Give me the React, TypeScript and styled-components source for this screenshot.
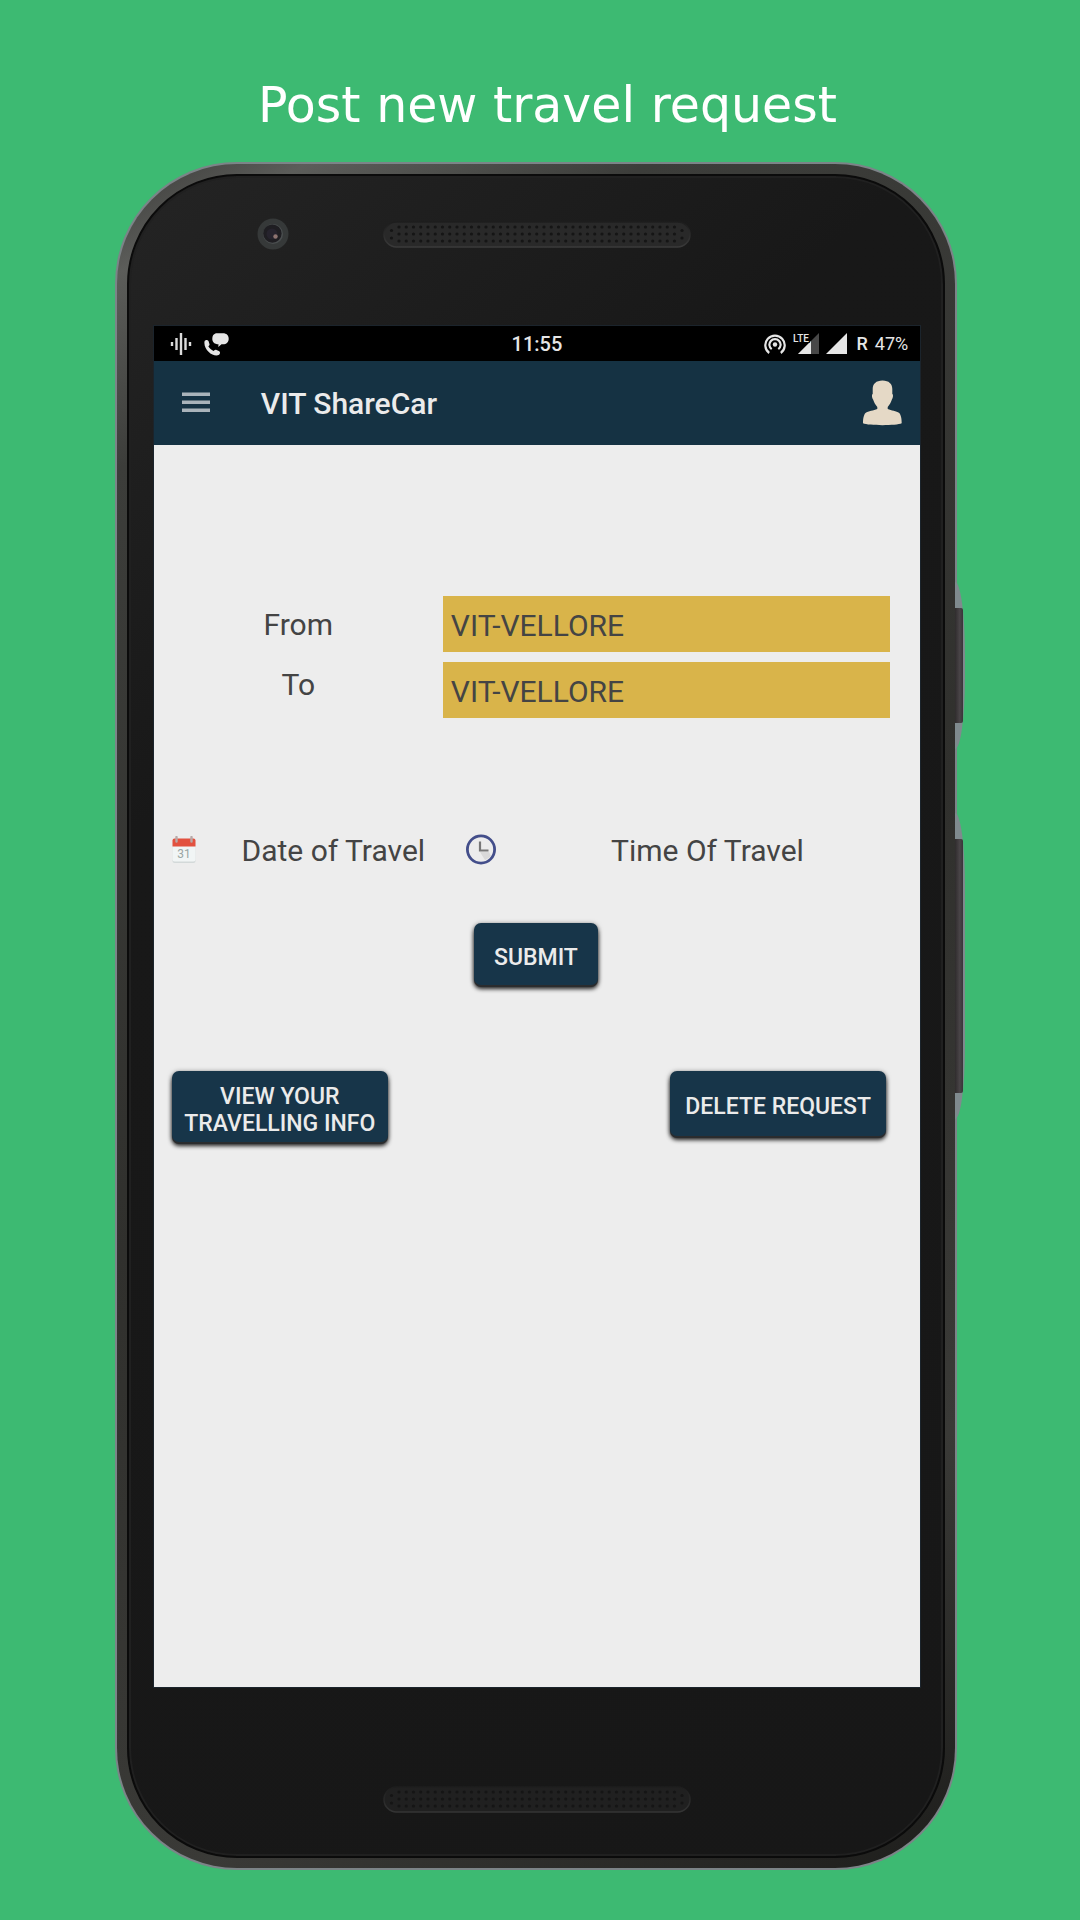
import React, { useState } from "react";
import styled, { createGlobalStyle } from "styled-components";

const GlobalStyle = createGlobalStyle`
  * { box-sizing: border-box; }
  body {
    margin: 0;
    background: #3dba72;
    font-family: Roboto, "Liberation Sans", sans-serif;
    color: #444;
  }
  button, select { font: inherit; border: 0; margin: 0; }
`;

const Page = styled.main`
  display: flex;
  flex-direction: column;
  align-items: center;
  min-height: 100vh;
  padding: 74px 0 50px;
  background: #3dba72;
`;

const Headline = styled.h1`
  margin: 0;
  padding-left: 15px;
  font-family: Verdana, "DejaVu Sans", sans-serif;
  font-size: 49px;
  line-height: 64px;
  font-weight: 400;
  color: #fff;
`;

const Phone = styled.section`
  position: relative;
  z-index: 0;
  width: 78%;
  margin: 24px 8px 0 0;
  padding: 2px;
  border-radius: 122px;
  background: #7c8488;
`;

const SideKey = styled.span<{ $top: number; $height: number }>`
  position: absolute;
  left: calc(100% - 2px);
  top: ${(p) => p.$top}px;
  width: 8px;
  height: ${(p) => p.$height}px;
  border-radius: 0 2px 2px 0;
  background: linear-gradient(90deg, #2f2c2d, #4a4548 60%, #38363a);

  &::before {
    content: "";
    position: absolute;
    z-index: -1;
    inset: -26px -2px -26px 0;
    border-radius: 0 10px 10px 0 / 0 72px 72px 0;
    background: #7f8a8e;
  }
`;

const Rim = styled.div`
  padding: 10px;
  border-radius: 120px;
  background: linear-gradient(150deg, #3a3a38 0, #5c5d5a 5%, #3c3d3a 14%, #30302d 50%, #3a3a37 80%, #1d1d1b 100%);
`;

const Face = styled.div`
  display: flex;
  flex-direction: column;
  padding: 0 23px 0 25px;
  border: 2px solid #0b0b0b;
  border-radius: 110px;
  box-shadow: inset 0 0 0 2px #202020;
  background: linear-gradient(140deg, #242424 0, #181818 28%, #171717 100%);
`;

const TopBezel = styled.div`
  display: grid;
  grid-template-columns: 1fr 308px 1fr;
  align-items: center;
  height: 150px;
  padding-bottom: 34px;
`;

const BottomBezel = styled.div`
  display: flex;
  justify-content: center;
  padding: 99px 0 43px;
`;

const CameraIcon = styled.svg`
  justify-self: center;
  margin-left: 10px;
`;

const Screen = styled.div`
  display: flex;
  flex-direction: column;
  box-shadow: 0 0 0 1px #1b242c;
  background: #ededed;
`;

const StatusBar = styled.div`
  display: grid;
  grid-template-columns: 1fr auto 1fr;
  align-items: center;
  height: 35px;
  padding: 1px 12px 0;
  background: #000;
  color: #e6e6e6;
  font-size: 18px;
  line-height: 24px;
`;

const StatusGroup = styled.div<{ $end?: boolean; $gap: number }>`
  display: flex;
  align-items: center;
  justify-content: ${(p) => (p.$end ? "flex-end" : "flex-start")};
  gap: ${(p) => p.$gap}px;
  padding-left: 4px;
`;

const Clock = styled.time`
  font-size: 20px;
  font-weight: 500;
`;

const Roaming = styled.span`
  padding-left: 2px;
  font-weight: 500;
`;

const AppBar = styled.header`
  display: flex;
  align-items: center;
  height: 84px;
  padding: 0 16px 0 24px;
  background: #153243;
`;

const IconButton = styled.button`
  display: flex;
  padding: 0;
  background: none;
  cursor: pointer;
`;

const AppTitle = styled.h2`
  flex: 1;
  margin: 0 0 0 47px;
  padding-top: 2px;
  font-size: 30px;
  line-height: 36px;
  font-weight: 500;
  color: #ebebeb;
`;

const Form = styled.form`
  display: flex;
  flex-direction: column;
  min-height: 1242px;
  padding: 151px 30px 0 0;
  font-size: 30px;
  line-height: 36px;
`;

const Places = styled.div`
  display: grid;
  grid-template-columns: 289px 1fr;
`;

const Stack = styled.div<{ $gap: number; $top?: number }>`
  display: flex;
  flex-direction: column;
  gap: ${(p) => p.$gap}px;
  padding-top: ${(p) => p.$top ?? 0}px;
  text-align: center;
`;

const PlaceSelect = styled.select`
  appearance: none;
  width: 100%;
  height: 56px;
  padding: 3px 8px 0;
  border-radius: 0;
  background: #d9b44a;
  color: #444;
  cursor: pointer;
`;

const When = styled.div`
  display: grid;
  grid-template-columns: 289px 1fr;
  margin-top: 110px;
`;

const PickButton = styled.button<{ $indent: number }>`
  display: grid;
  grid-template-columns: auto 1fr;
  align-items: center;
  padding: 0 0 0 ${(p) => p.$indent}px;
  background: none;
  color: #444;
  line-height: 40px;
  cursor: pointer;
`;

const PickLabel = styled.span`
  padding: 3px 0 0 28px;
  text-align: center;
`;

const Raised = styled.button<{ $width: number; $height: number }>`
  width: ${(p) => p.$width}px;
  height: ${(p) => p.$height}px;
  padding: 6px 8px 0;
  border-radius: 7px;
  background: #173549;
  box-shadow: 0 2px 0 #2a2c2e, 0 4px 4px rgba(0, 0, 0, 0.8), 0 1px 5px rgba(0, 0, 0, 0.5);
  color: #ebebeb;
  font-size: 23px;
  line-height: 27px;
  font-weight: 500;
  cursor: pointer;
`;

const SubmitRow = styled.div`
  display: flex;
  justify-content: center;
  margin: 52px 0 0 28px;
`;

const Actions = styled.div`
  display: flex;
  justify-content: space-between;
  align-items: flex-start;
  margin-top: 86px;
  padding: 0 4px 0 18px;
`;

function Grille({ id, fill, edge }: { id: string; fill: string; edge: string }) {
  const cols = Array.from({ length: 39 }, (_, i) => 16 + i * 7.25);
  return (
    <svg width="308" height="27" viewBox="0 0 308 27" aria-hidden="true">
      <defs>
        <linearGradient id={id} x1="0" y1="0" x2="0" y2="1">
          <stop offset="0" stopColor="#1d1d1d" />
          <stop offset="1" stopColor={edge} />
        </linearGradient>
      </defs>
      <rect x="1" y="1" width="306" height="25" rx="12.5" fill={fill} stroke={`url(#${id})`} strokeWidth="1.5" />
      {cols.map((x) =>
        [6, 13, 20].map((y) => <circle key={`${x}-${y}`} cx={x} cy={y} r="1.6" fill="#151515" />)
      )}
      {[8.5, 299].map((x) =>
        [9.5, 17].map((y) => <circle key={`${x}-${y}`} cx={x} cy={y} r="1.6" fill="#151515" />)
      )}
    </svg>
  );
}

function Camera() {
  return (
    <CameraIcon width="32" height="32" viewBox="0 0 32 32" aria-hidden="true">
      <circle cx="16" cy="16" r="15.5" fill="#363939" />
      <circle cx="16" cy="16" r="10" fill="#4a4e4f" />
      <circle cx="15.4" cy="15.6" r="9.2" fill="#1f1e22" />
      <circle cx="15" cy="16" r="5.5" fill="#26232d" />
      <circle cx="18.5" cy="18.5" r="2.2" fill="#8d7370" />
    </CameraIcon>
  );
}

function WaveIcon() {
  return (
    <svg width="22" height="22" viewBox="0 0 22 22" stroke="#dcdcdc" strokeWidth="2.4" aria-hidden="true">
      <path d="M2 9v4M6.500 5v12M11 0v22M15.500 5v12M20 9v4" />
    </svg>
  );
}

function CallIcon() {
  return (
    <svg width="25" height="23" viewBox="0 0 25 23" fill="#e6e6e6" aria-hidden="true">
      <path d="M.5 8.500C1 6.800 3.500 6.500 4.500 8l1 3.200c.2.900-.6 1.600-1.200 2.100 1.300 2.300 3 3.700 5.200 4.700.6-.6 1.400-1.600 2.500-1.300l3.300 1.500c1.100.8.900 2.600-.2 3.500C10.500 25-.8 17.500.5 8.500z" />
      <path d="M13 .3h6c3.500 0 5.700 2.200 5.700 5.400s-2.200 5.600-5.700 5.600h-1.500L14.300 14l.2-2.700C10.500 11 8.300 9 8.300 5.900 8.300 2.500 10 .3 13 .3z" />
    </svg>
  );
}

function HotspotIcon() {
  return (
    <svg width="22" height="22" viewBox="0 0 22 22" fill="none" stroke="#e6e6e6" strokeWidth="2.2" aria-hidden="true">
      <circle cx="11" cy="11.500" r="2.200" fill="#e6e6e6" stroke="none" />
      <path d="M7.700 16.200A5.600 5.600 0 1 1 14.300 16.200M5.200 20A9.700 9.700 0 1 1 16.800 20" />
    </svg>
  );
}

function LteIcon() {
  return (
    <svg width="26" height="22" viewBox="0 0 26 22" aria-hidden="true">
      <path d="M26 0v21H5z" fill="#484848" />
      <path d="M18 8v13H5z" fill="#e6e6e6" />
      <text x="0" y="9" fontFamily="Roboto, sans-serif" fontSize="10" fontWeight="500" fill="#e6e6e6" stroke="#000" strokeWidth="2" paintOrder="stroke">
        LTE
      </text>
    </svg>
  );
}

function SignalIcon() {
  return (
    <svg width="21" height="22" viewBox="0 0 21 22" aria-hidden="true">
      <path d="M21 0v21H0z" fill="#e6e6e6" />
    </svg>
  );
}

function MenuIcon() {
  return (
    <svg width="36" height="36" viewBox="0 0 36 36" fill="#a9b3ba" aria-hidden="true">
      <path d="M4 7.500h28v3.500H4zM4 15.500h28V19H4zM4 23.500h28V27H4z" />
    </svg>
  );
}

function PersonIcon() {
  return (
    <svg width="42" height="46" viewBox="0 0 42 46" fill="#e5d9c6" aria-hidden="true">
      <path d="M20.500 .5c6.500 0 9.800 3.500 9.800 8.500v5c1 0 1 3.500-.4 5.600-.8 2.400-2 5-4.200 7.300v2.200c3.500 1.700 8.700 1.700 11.500 4 2 2 2.500 6.500 2.500 10.200C34.500 45.800 6.500 45.800 1 43.300c0-3.700.5-8.200 2.500-10.200 2.800-2.300 8.300-2.300 11.800-4v-2.200c-2.200-2.300-3.400-4.900-4.200-7.300-1.400-2.100-1.400-5.600-.4-5.600V9C10.700 4 14 .5 20.500 .5z" />
    </svg>
  );
}

function CalendarIcon() {
  return (
    <svg width="24" height="28" viewBox="0 0 24 28" aria-hidden="true">
      <rect x=".5" y="4" width="23" height="23" rx="2" fill="#d3d9d9" />
      <rect x=".5" y="3" width="23" height="22.500" rx="2" fill="#f1f5f5" />
      <path d="M0.500 10.500V4.500Q.5 2.500 2.500 2.500h19q2 0 2 2v6z" fill="#e2513f" />
      <path d="M4.500 1v4.500M19.500 1v4.500" stroke="#b9a9a7" strokeWidth="2.400" strokeLinecap="round" />
      <text x="12" y="22" textAnchor="middle" fontFamily="Roboto, sans-serif" fontSize="12" fill="#9aa5a3">
        31
      </text>
    </svg>
  );
}

function ClockIcon() {
  return (
    <svg width="32" height="32" viewBox="0 0 32 32" aria-hidden="true">
      <circle cx="16" cy="15.500" r="13.600" fill="#ececec" stroke="#434e8a" strokeWidth="2.800" />
      <path d="M15 18h9l2 4a12 12 0 0 1-6 4z" fill="#d9d9d9" />
      <path d="M15 7.500V16.500h8.500" fill="none" stroke="#777" strokeWidth="2.200" />
    </svg>
  );
}

const places = ["VIT-VELLORE", "KATPADI STATION", "CHENNAI AIRPORT", "BANGALORE AIRPORT"];

function PlaceField({ id, value, onChange }: { id: string; value: string; onChange: (v: string) => void }) {
  return (
    <PlaceSelect id={id} value={value} onChange={(e) => onChange(e.target.value)}>
      {places.map((p) => (
        <option key={p}>{p}</option>
      ))}
    </PlaceSelect>
  );
}

export default function App() {
  const [from, setFrom] = useState(places[0]);
  const [to, setTo] = useState(places[0]);

  return (
    <>
      <GlobalStyle />
      <Page>
        <Headline>Post new travel request</Headline>
        <Phone>
          <SideKey $top={446} $height={115} />
          <SideKey $top={677} $height={254} />
          <Rim>
            <Face>
              <TopBezel>
                <Camera />
                <Grille id="earpiece" fill="#292929" edge="#3a3a3a" />
              </TopBezel>
              <Screen>
                <StatusBar>
                  <StatusGroup $gap={12}>
                    <WaveIcon />
                    <CallIcon />
                  </StatusGroup>
                  <Clock>11:55</Clock>
                  <StatusGroup $end $gap={7}>
                    <HotspotIcon />
                    <LteIcon />
                    <SignalIcon />
                    <Roaming>R</Roaming>
                    <span>47%</span>
                  </StatusGroup>
                </StatusBar>
                <AppBar>
                  <IconButton type="button" aria-label="Open menu">
                    <MenuIcon />
                  </IconButton>
                  <AppTitle>VIT ShareCar</AppTitle>
                  <IconButton type="button" aria-label="Profile">
                    <PersonIcon />
                  </IconButton>
                </AppBar>
                <Form onSubmit={(e) => e.preventDefault()}>
                  <Places>
                    <Stack $gap={24} $top={11}>
                      <label htmlFor="from">From</label>
                      <label htmlFor="to">To</label>
                    </Stack>
                    <Stack $gap={10}>
                      <PlaceField id="from" value={from} onChange={setFrom} />
                      <PlaceField id="to" value={to} onChange={setTo} />
                    </Stack>
                  </Places>
                  <When>
                    <PickButton type="button" $indent={18}>
                      <CalendarIcon />
                      <PickLabel>Date of Travel</PickLabel>
                    </PickButton>
                    <PickButton type="button" $indent={22}>
                      <ClockIcon />
                      <PickLabel>Time Of Travel</PickLabel>
                    </PickButton>
                  </When>
                  <SubmitRow>
                    <Raised type="submit" $width={124} $height={62}>SUBMIT</Raised>
                  </SubmitRow>
                  <Actions>
                    <Raised type="button" $width={216} $height={71}>VIEW YOUR TRAVELLING INFO</Raised>
                    <Raised type="button" $width={216} $height={65}>DELETE REQUEST</Raised>
                  </Actions>
                </Form>
              </Screen>
              <BottomBezel>
                <Grille id="speaker" fill="#202020" edge="#343434" />
              </BottomBezel>
            </Face>
          </Rim>
        </Phone>
      </Page>
    </>
  );
}
